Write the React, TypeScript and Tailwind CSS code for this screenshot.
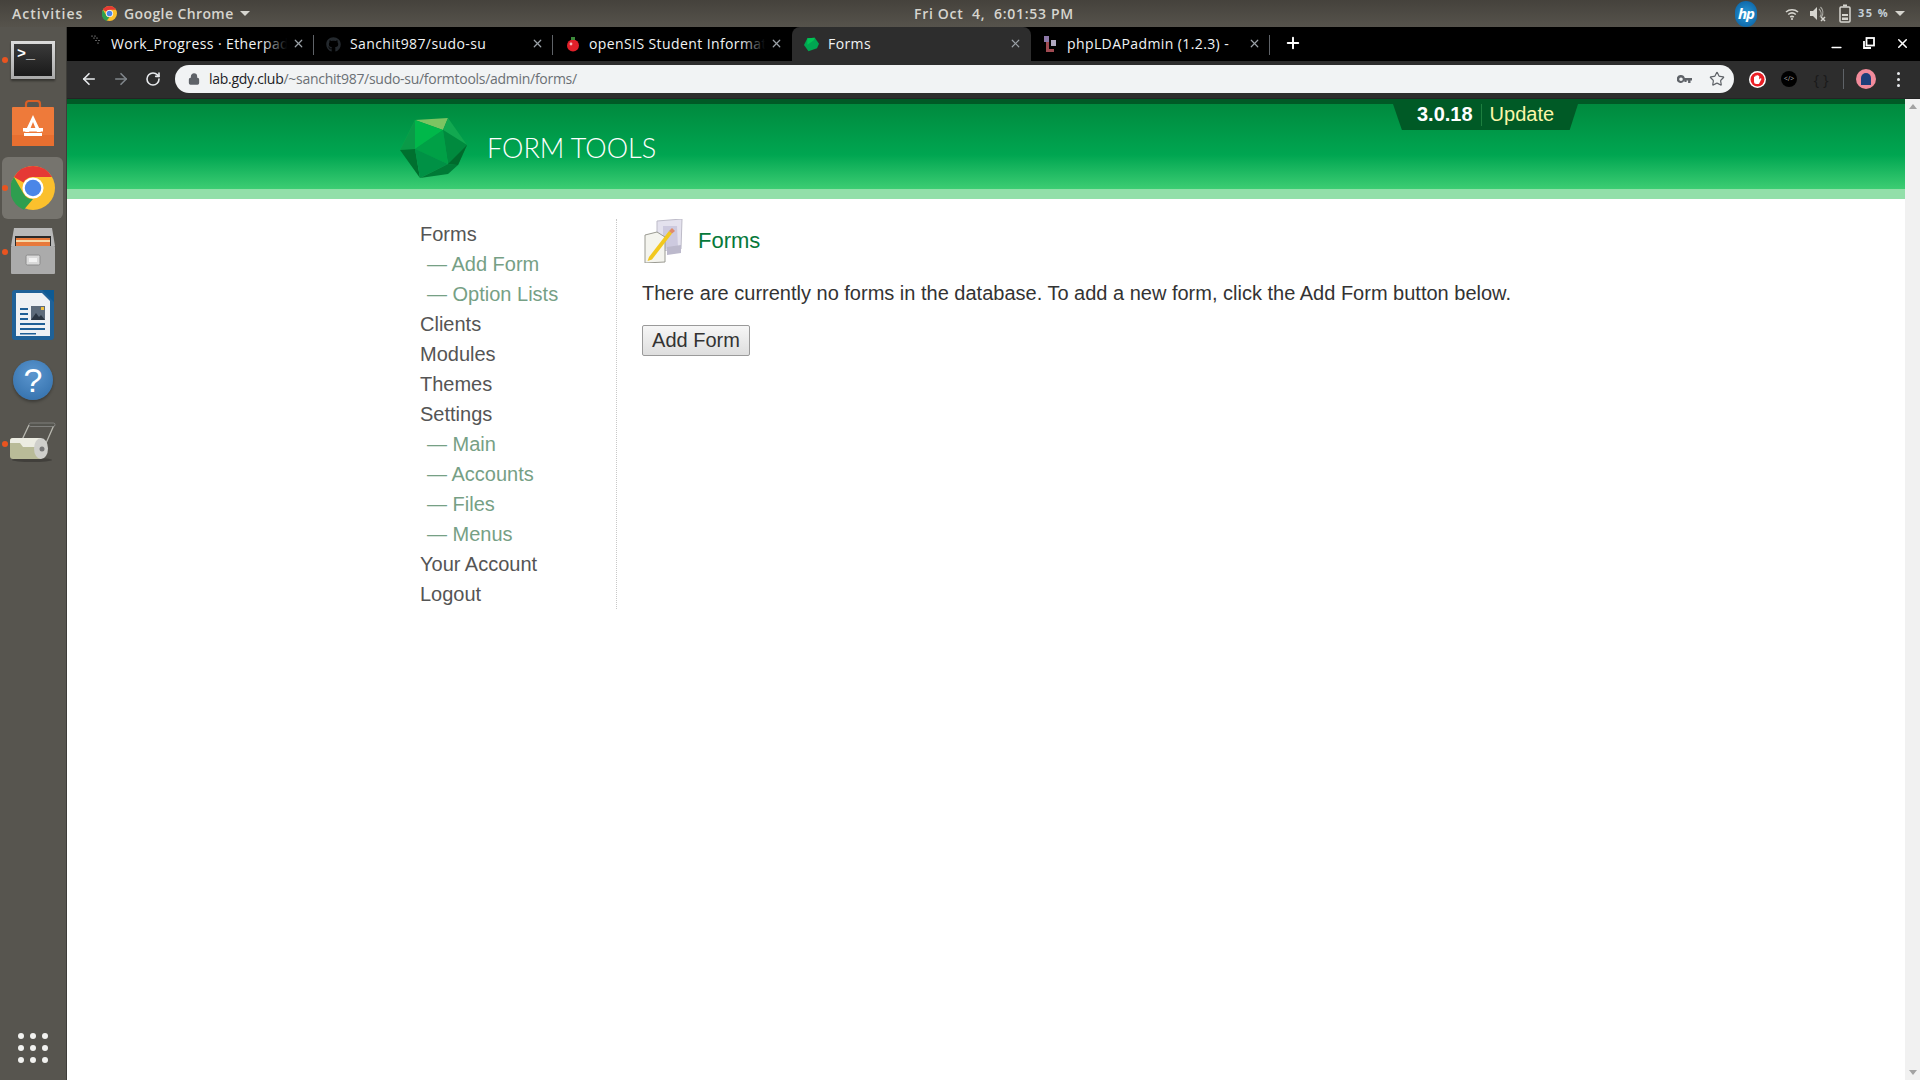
import { ArrowLeft, ArrowRight, RotateCw, Lock, Star, X, Plus, Minus } from "lucide-react";
import { FaGithub } from "react-icons/fa";

function ChromeIcon({ size }: { size: number }) {
  return (
    <svg width={size} height={size} viewBox="0 0 48 48">
      <circle cx="24" cy="24" r="24" fill="#fbc02d" />
      <path d="M24 0A24 24 0 0 1 44.8 12H24a12 12 0 0 0-10.4 6L3.2 12A24 24 0 0 1 24 0z" fill="#e53935" />
      <path d="M3.2 12 13.6 30A12 12 0 0 0 24 36L14 47.8A24 24 0 0 1 3.2 12z" fill="#2e9e4f" />
      <circle cx="24" cy="24" r="11.5" fill="#fff" />
      <circle cx="24" cy="24" r="9" fill="#4a86e8" />
    </svg>
  );
}

function Gem({ w, h }: { w: number; h: number }) {
  return (
    <svg width={w} height={h} viewBox="0 0 67 60">
      <polygon points="15,2 48,0 43,12" fill="#7cc462" />
      <polygon points="15,2 43,12 15,31 0,32" fill="#00b84a" />
      <polygon points="48,0 67,27 43,12" fill="#12a850" />
      <polygon points="43,12 67,27 58,47 48,46" fill="#008a3e" />
      <polygon points="43,12 48,46 15,31" fill="#00a046" />
      <polygon points="15,2 15,31 0,32" fill="#0a9a48" />
      <polygon points="0,32 15,31 20,60" fill="#00702f" />
      <polygon points="15,31 48,46 20,60" fill="#009145" />
      <polygon points="48,46 58,47 48,56 20,60" fill="#007a36" />
      <polygon points="48,46 67,27 58,47" fill="#006a2c" />
    </svg>
  );
}

function Tab({
  title,
  icon,
  active,
  sep,
  fade,
}: {
  title: string;
  icon: React.ReactNode;
  active?: boolean;
  sep?: boolean;
  fade?: boolean;
}) {
  return (
    <div
      className={`relative w-[239px] h-[34px] flex items-center shrink-0 ${
        active ? "bg-[#2d2d2d] rounded-t-lg" : ""
      }`}
    >
      <div className="w-[36px] pl-[3px] flex items-center justify-center shrink-0">{icon}</div>
      <div className="w-[176px] -mt-[2px] overflow-hidden whitespace-nowrap text-[14px] tracking-[0.4px] text-[#f1f3f4] relative">
        {title}
        {fade && (
          <div className="absolute right-0 top-0 bottom-0 w-[24px] bg-gradient-to-r from-transparent to-black" />
        )}
      </div>
      <X size={13} className="ml-[5px] -mt-[1px] text-[#9aa0a6] shrink-0" strokeWidth={2.2} />
      {sep && <div className="absolute right-0 top-[8px] h-[20px] w-px bg-[#5f6368]" />}
    </div>
  );
}

function DockItem({ dot, active, children }: { dot?: boolean; active?: boolean; children: React.ReactNode }) {
  return (
    <div className="relative h-[64px] w-full flex items-center justify-center">
      {active && <div className="absolute left-[2px] right-[3px] top-[1px] bottom-[1px] rounded-md bg-[#76746e]" />}
      {dot && <div className="absolute left-[2px] top-[29px] w-[6px] h-[6px] rounded-full bg-[#e95420]" />}
      <div className="relative">{children}</div>
    </div>
  );
}

const navItems: [string, boolean][] = [
  ["Forms", false],
  ["Add Form", true],
  ["Option Lists", true],
  ["Clients", false],
  ["Modules", false],
  ["Themes", false],
  ["Settings", false],
  ["Main", true],
  ["Accounts", true],
  ["Files", true],
  ["Menus", true],
  ["Your Account", false],
  ["Logout", false],
];

export default function App() {
  return (
    <div className="w-[1920px] h-[1080px] overflow-hidden flex flex-col bg-white font-['Open_Sans',sans-serif]">
      {/* system bar */}
      <div className="h-[27px] shrink-0 flex items-center relative bg-[linear-gradient(#45423c,#56534c)] text-[#d6d5cf] text-[14px] font-semibold tracking-[0.4px]">
        <span className="ml-[12px] w-[90px] tracking-[1px]">Activities</span>
        <ChromeIcon size={15} />
        <span className="ml-[7px]">Google Chrome</span>
        <div className="ml-[6px] w-0 h-0 border-l-[5px] border-r-[5px] border-t-[5px] border-l-transparent border-r-transparent border-t-[#d6d5cf]" />
        <span className="absolute left-[914px] top-[3px] tracking-[0.7px]">Fri Oct&nbsp; 4,&nbsp; 6:01:53 PM</span>
        <div className="ml-auto flex items-center">
          <div className="w-[22px] h-[26px] rounded-full bg-[radial-gradient(circle,#2a9ad8,#075a9c)] flex items-center justify-center text-white italic font-bold text-[15px] tracking-[-1px] translate-x-[9px]">
            hp
          </div>
          <svg className="ml-[37px]" width="14" height="14" viewBox="0 0 14 14" fill="none" stroke="#d6d5cf" strokeWidth="1.6">
            <path d="M1 5a9 9 0 0 1 12 0M3.2 7.5a6 6 0 0 1 7.6 0M5.2 10a3 3 0 0 1 3.6 0" />
            <circle cx="7" cy="12" r="1.1" fill="#d6d5cf" stroke="none" />
          </svg>
          <svg className="ml-[11px]" width="17" height="16" viewBox="0 0 17 16" fill="#d6d5cf">
            <path d="M0 5h3l4-4v13L3 10H0z" />
            <path d="M9 3a6 6 0 0 1 1 8M10.5 1a8 8 0 0 1 1 10" fill="none" stroke="#a9a8a2" strokeWidth="1.2" />
            <path d="M11 11l4 4m0-4l-4 4" stroke="#d6d5cf" strokeWidth="1.5" />
          </svg>
          <svg className="ml-[12px]" width="12" height="19" viewBox="0 0 12 19" fill="none" stroke="#d6d5cf" strokeWidth="1.5">
            <rect x="1" y="3" width="10" height="15" rx="1" />
            <rect x="4" y="0.5" width="4" height="2" fill="#d6d5cf" stroke="none" />
            <rect x="3" y="10" width="6" height="2" fill="#d6d5cf" stroke="none" />
            <rect x="3" y="13.5" width="6" height="2.5" fill="#d6d5cf" stroke="none" />
          </svg>
          <span className="ml-[7px] text-[11px] font-bold tracking-[1.4px] text-[#c4d0d8]">35 %</span>
          <div className="ml-[6px] mr-[15px] w-0 h-0 border-l-[5px] border-r-[5px] border-t-[5px] border-l-transparent border-r-transparent border-t-[#d6d5cf]" />
        </div>
      </div>

      <div className="flex-1 min-h-0 flex">
        {/* dock */}
        <div className="w-[67px] shrink-0 flex flex-col pt-px bg-[#57554f] border-r border-[#3e3d39]">
          <DockItem dot>
            <div className="w-[44px] h-[38px] bg-[linear-gradient(#dcdcdc,#a8a8a8)] p-[3px] shadow-[0_2px_2px_rgba(0,0,0,0.4)]">
              <div className="w-full h-full bg-[linear-gradient(#3a3a3a,#1a1a1a)] text-white font-['Liberation_Mono',monospace] font-bold text-[15px] leading-[22px] pl-[3px]">
                &gt;_
              </div>
            </div>
          </DockItem>
          <DockItem>
            <svg width="42" height="46" viewBox="0 0 42 46" className="-translate-y-[1px]">
              <path d="M14 10V4a3 3 0 0 1 3-3h8a3 3 0 0 1 3 3v6" fill="none" stroke="#d85f26" strokeWidth="2.2" />
              <rect y="7" width="42" height="39" rx="1" fill="#ee7a3a" />
              <rect y="35" width="42" height="11" fill="#e86f30" />
              <path d="M21 15l8 17h-4l-4-10-4 10h-4z" fill="#fff" />
              <rect x="11" y="28" width="20" height="3.5" fill="#fff" />
              <rect x="12" y="33" width="18" height="3" fill="#fff" />
            </svg>
          </DockItem>
          <DockItem active dot>
            <ChromeIcon size={44} />
          </DockItem>
          <DockItem dot>
            <svg width="44" height="46" viewBox="0 0 44 46" className="-translate-y-[1px]">
              <path d="M3 0h38l3 18H0z" fill="#b8b8b8" />
              <rect x="4" y="8" width="36" height="17" fill="#2a2a2a" />
              <rect x="5" y="10" width="34" height="9" fill="#e8793a" />
              <rect x="5" y="12" width="34" height="2" fill="#f5d9a8" />
              <rect y="18" width="44" height="28" rx="1" fill="#ababab" />
              <rect x="15" y="27" width="14" height="10" rx="1.5" fill="#d9d9d9" stroke="#8c8c8c" />
              <rect x="18" y="30" width="8" height="4" fill="#f2f2f2" />
            </svg>
          </DockItem>
          <DockItem>
            <svg width="42" height="50" viewBox="0 0 42 50" className="-translate-y-[1px]">
              <path d="M3 0h30l9 9v38a3 3 0 0 1-3 3H3a3 3 0 0 1-3-3V3a3 3 0 0 1 3-3z" fill="#1f6198" />
              <path d="M4 3h26l8 8v35H4z" fill="#eef1f4" />
              <path d="M30 0l12 0v12z" fill="#0d5a94" />
              <g fill="#1f5f96">
                <rect x="8" y="18" width="8" height="2" />
                <rect x="8" y="23" width="8" height="2" />
                <rect x="8" y="28" width="8" height="2" />
                <rect x="8" y="33" width="25" height="2" />
                <rect x="8" y="38" width="25" height="2" />
                <rect x="8" y="43" width="16" height="1.5" />
              </g>
              <rect x="19" y="16" width="14" height="14" fill="#5d6b7a" />
              <path d="M19 30l5-7 3 4 2-2 4 5z" fill="#2b3642" />
              <rect x="29" y="17" width="3" height="3" fill="#f0c040" />
            </svg>
          </DockItem>
          <DockItem>
            <div className="w-[40px] h-[40px] rounded-full bg-[radial-gradient(circle_at_50%_35%,#5b96cf,#2f6ca8)] flex items-center justify-center text-white text-[34px] font-['Liberation_Sans',sans-serif] shadow-[0_2px_3px_rgba(0,0,0,0.3)]">
              ?
            </div>
          </DockItem>
          <DockItem dot>
            <svg width="46" height="40" viewBox="0 0 46 40" className="-translate-y-[2px]">
              <path d="M19 3L11 20M44 3L33 28" fill="none" stroke="#b8b8b0" strokeWidth="1.3" />
              <rect x="19" y="1" width="26" height="3.5" rx="1.7" fill="#55554f" stroke="#aaa" strokeWidth="0.5" />
              <ellipse cx="22" cy="38" rx="20" ry="2" fill="#000" opacity="0.25" />
              <path d="M3 16h28v21H3a3 3 0 0 1-3-3V19a3 3 0 0 1 3-3z" fill="#b9bb98" />
              <path d="M0 19a3 3 0 0 1 3-3h28v9H13l-3-4H0z" fill="#ecece2" />
              <ellipse cx="31" cy="26.5" rx="7" ry="10.5" fill="#cfcfcb" />
              <circle cx="32" cy="27" r="2.5" fill="#777" />
            </svg>
          </DockItem>
          <div className="mt-auto mb-[17px] mx-auto grid grid-cols-3 gap-[6px]">
            {Array.from({ length: 9 }).map((_, i) => (
              <div key={i} className="w-[6px] h-[6px] rounded-full bg-[#f2f2f0]" />
            ))}
          </div>
        </div>

        <div className="flex-1 min-w-0 flex flex-col">
          {/* tab strip */}
          <div className="h-[34px] shrink-0 bg-black flex pl-[8px] items-end">
            <Tab
              title="Work_Progress · Etherpad"
              fade
              sep
              icon={
                <svg width="10" height="10" viewBox="0 0 10 10" fill="#d0d0d0" className="translate-x-[1px] -translate-y-[4px]">
                  <circle cx="1" cy="1" r="0.6" /><circle cx="4" cy="1" r="0.6" /><circle cx="3" cy="3" r="0.6" />
                  <circle cx="6" cy="3" r="0.6" /><circle cx="5" cy="5.5" r="0.6" /><circle cx="8" cy="5.5" r="0.6" />
                  <circle cx="7" cy="8" r="0.6" />
                </svg>
              }
            />
            <Tab title="Sanchit987/sudo-su" sep icon={<FaGithub size={15} className="text-[#24292e]" />} />
            <Tab
              title="openSIS Student Information"
              fade
              icon={
                <svg width="14" height="16" viewBox="0 0 14 16">
                  <circle cx="7" cy="9.5" r="6" fill="#e0202a" />
                  <rect x="5" y="1" width="4" height="3" fill="#3c8a3a" />
                  <circle cx="5" cy="8" r="1.4" fill="#fff" opacity="0.7" />
                </svg>
              }
            />
            <Tab
              active
              title="Forms"
              icon={
                <svg width="15" height="15" viewBox="0 0 67 60">
                  <polygon points="15,2 48,0 67,27 58,47 20,60 0,32" fill="#00a651" />
                  <polygon points="15,2 48,0 43,12 15,31" fill="#00c455" />
                </svg>
              }
            />
            <Tab
              title="phpLDAPadmin (1.2.3) -"
              sep
              icon={
                <svg width="13" height="16" viewBox="0 0 13 16">
                  <rect x="0" y="0" width="5" height="6" fill="#8d78a8" />
                  <rect x="2" y="6" width="3" height="10" fill="#a04a52" />
                  <rect x="7" y="4" width="5" height="6" fill="#b0a8c0" />
                  <rect x="5" y="13" width="5" height="3" fill="#a04a52" />
                </svg>
              }
            />
            <div className="ml-[14px] h-[34px] flex items-center -translate-y-[1px]">
              <Plus size={18} strokeWidth={2.6} className="text-white" />
            </div>
            <div className="ml-auto h-[34px] flex items-center text-white -translate-y-[1px]">
              <Minus size={15} strokeWidth={2.4} className="mr-[19px] translate-y-[4px]" />
              <svg width="12" height="12" viewBox="0 0 12 12" fill="none" stroke="#fff" strokeWidth="1.8" className="mr-[20px]">
                <rect x="3.5" y="1" width="7.5" height="7.5" />
                <path d="M1 4v7h7" />
              </svg>
              <X size={15} strokeWidth={2.4} className="mr-[10px]" />
            </div>
          </div>

          {/* toolbar */}
          <div className="h-[38px] shrink-0 bg-[#2d2d2d] border-b border-[#242424] flex items-start pt-[4px]">
            <div className="w-[108px] h-[28px] flex items-center pl-[13px]">
              <ArrowLeft size={18} strokeWidth={2.2} className="text-[#e8eaed]" />
              <ArrowRight size={18} strokeWidth={2.2} className="ml-[14px] text-[#80868b]" />
              <RotateCw size={16} strokeWidth={2.4} className="ml-[15px] text-[#e8eaed]" />
            </div>
            <div className="w-[1559px] h-[28px] rounded-full bg-[#f1f3f4] flex items-center pl-[13px] pr-[9px] text-[14px] tracking-[-0.28px]">
              <Lock size={12} strokeWidth={2.6} className="text-[#5f6368] fill-[#5f6368]" />
              <span className="ml-[9px] text-[#202124] -mt-[1px]">lab.gdy.club</span>
              <span className="text-[#6b7075] -mt-[1px]">/~sanchit987/sudo-su/formtools/admin/forms/</span>
              <svg width="15" height="9" viewBox="0 0 15 9" className="ml-auto mr-[17px]" fill="#5f6368">
                <path fillRule="evenodd" d="M4 0a4 4 0 0 1 3.8 3H15v2.6h-1.5V8h-2.4V5.6H9.6V7H7.4V5.6A4 4 0 1 1 4 0zm0 2.4a1.8 1.8 0 1 0 0 3.6 1.8 1.8 0 0 0 0-3.6z" />
              </svg>
              <Star size={16} strokeWidth={1.8} className="text-[#5f6368]" />
            </div>
            <div className="flex-1 h-[28px] flex items-center pl-[15px]">
              <svg width="17" height="17" viewBox="0 0 17 17">
                <circle cx="8.5" cy="8.5" r="8.5" fill="#fff" />
                <circle cx="8.5" cy="8.5" r="7" fill="#ea1f25" />
                <path d="M5 9V6a.7.7 0 0 1 1.2 0V5a.7.7 0 0 1 1.3 0v-.4a.7.7 0 0 1 1.4 0V5a.7.7 0 0 1 1.3 0v3.6l1-1a.7.7 0 0 1 1 1L10.2 12.5a1.5 1.5 0 0 1-1.2.5H7.5A2.5 2.5 0 0 1 5 10.5z" fill="#fff" />
              </svg>
              <div className="ml-[15px] w-[16px] h-[16px] rounded-full bg-black text-[#aaa] text-[7px] flex items-center justify-center">
                {"</>"}
              </div>
              <div className="ml-[16px] w-[16px] text-[#1a1a1a] text-[15px] text-center leading-none whitespace-nowrap">{"{ }"}</div>
              <div className="ml-[14px] w-px h-[20px] bg-[#5f6368]" />
              <div className="ml-[12px] w-[20px] h-[20px] rounded-full bg-[#f28b9b] flex items-center justify-center">
                <div className="w-[10px] h-[12px] rounded-t-full bg-[#1f3f7a]" />
              </div>
              <div className="ml-[21px] flex flex-col gap-[3px]">
                <div className="w-[3px] h-[3px] rounded-full bg-[#e8eaed]" />
                <div className="w-[3px] h-[3px] rounded-full bg-[#e8eaed]" />
                <div className="w-[3px] h-[3px] rounded-full bg-[#e8eaed]" />
              </div>
            </div>
          </div>

          {/* page */}
          <div className="flex-1 min-h-0 flex font-['Liberation_Sans',sans-serif]">
            <div className="flex-1 min-w-0 flex flex-col">
              <header className="relative h-[100px] shrink-0 border-t-[5px] border-[#005a26] border-b-[10px] border-b-[#92dfa9] bg-[linear-gradient(#008a3e,#00a651_60%,#3dcd73)] flex items-center pl-[333px] pt-[2px]">
                <Gem w={67} h={60} />
                <span className="ml-[20px] text-[27px] leading-none font-['Lato',sans-serif] font-light text-white">FORM TOOLS</span>
                <div className="absolute top-0 right-[327px] w-[185px] h-[26px] bg-[#005a26] [clip-path:polygon(0_0,100%_0,95.5%_100%,4.8%_100%)] flex items-center pl-[24px] pb-[6px] text-[20px]">
                  <span className="font-bold text-white">3.0.18</span>
                  <div className="mx-[8px] mt-[2px] w-px h-[22px] bg-[#1d7f3f]" />
                  <span className="text-[#fbf6a8]">Update</span>
                </div>
              </header>
              <div className="flex pl-[353px] pt-[20px] text-[20px] leading-[30px]">
                <nav className="w-[197px] h-[390px] border-r border-dotted border-[#c8c8c8]">
                  {navItems.map(([label, sub], i) => (
                    <div key={i} className={sub ? "pl-[7px] text-[#76a085]" : "text-[#555]"}>
                      {sub ? `— ${label}` : label}
                    </div>
                  ))}
                </nav>
                <main className="pl-[25px] text-[#333]">
                  <div className="flex items-center h-[44px]">
                    <svg width="42" height="44" viewBox="0 0 42 44" className="translate-x-[1px]">
                      <path d="M14 2l25-2-1 30-24 2z" fill="#e4e2ee" stroke="#bdbbc8" />
                      <path d="M20 7l14 0 1 22-15 1z" fill="#cdcadf" />
                      <path d="M2 16l12-3 8 5 0 25-20 1z" fill="#f4f4ee" stroke="#9a9a92" />
                      <path d="M6 38l20-26 3 2.5-20 26-4.5 1.5z" fill="#f2c81e" />
                      <path d="M26 12l3-3 3 3-3 2.5z" fill="#e08a6a" />
                      <path d="M24 28l14-2 0 8-14 2z" fill="#bcb9cc" />
                    </svg>
                    <span className="ml-[14px] text-[22px] text-[#06793a]">Forms</span>
                  </div>
                  <p className="mt-[15px] whitespace-nowrap">
                    There are currently no forms in the database. To add a new form, click the Add Form button below.
                  </p>
                  <button className="mt-[17px] w-[108px] h-[31px] pb-[2px] rounded-[2px] border border-[#9a9a9a] bg-[linear-gradient(#f6f6f6,#dedede)] text-[#333] text-[20px] leading-none">
                    Add Form
                  </button>
                </main>
              </div>
            </div>
            {/* scrollbar */}
            <div className="w-[15px] shrink-0 bg-[#f1f1f1] flex flex-col items-center justify-between py-[5px]">
              <div className="w-0 h-0 border-l-[4px] border-r-[4px] border-b-[5px] border-l-transparent border-r-transparent border-b-[#a3a3a3]" />
              <div className="w-0 h-0 border-l-[4px] border-r-[4px] border-t-[5px] border-l-transparent border-r-transparent border-t-[#a3a3a3]" />
            </div>
          </div>
        </div>
      </div>
    </div>
  );
}
